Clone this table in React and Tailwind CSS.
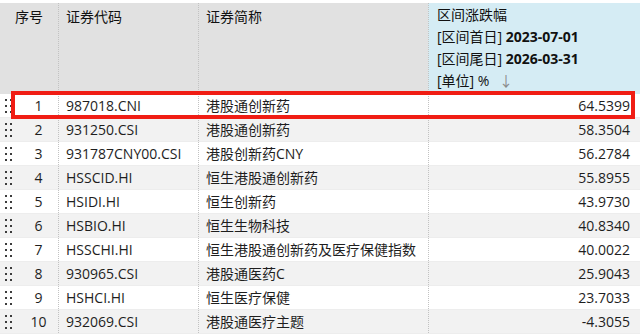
const rows = [
  [1, '987018.CNI', '港股通创新药', '64.5399'],
  [2, '931250.CSI', '港股通创新药', '58.3504'],
  [3, '931787CNY00.CSI', '港股创新药CNY', '56.2784'],
  [4, 'HSSCID.HI', '恒生港股通创新药', '55.8955'],
  [5, 'HSIDI.HI', '恒生创新药', '43.9730'],
  [6, 'HSBIO.HI', '恒生生物科技', '40.8340'],
  [7, 'HSSCHI.HI', '恒生港股通创新药及医疗保健指数', '40.0022'],
  [8, '930965.CSI', '港股通医药C', '25.9043'],
  [9, 'HSHCI.HI', '恒生医疗保健', '23.7033'],
  [10, '932069.CSI', '港股通医疗主题', '-4.3055'],
];

const Handle = () => (
  <div className="grid grid-cols-2 gap-x-[3px] gap-y-[4px] w-[7px]">
    {[0, 1, 2, 3, 4, 5].map((i) => (
      <span key={i} className="block h-[2px] w-[2px] bg-[#3c3c3c]"></span>
    ))}
  </div>
);

const App = () => {
  return (
    <div
      className="relative h-[334px] w-[640px] overflow-hidden bg-white text-[14px] text-[#1e1e1e]"
      style={{ fontFamily: '"Open Sans", "Noto Sans CJK SC", sans-serif' }}
    >
      {/* header */}
      <div className="mt-[3px] grid h-[91px] grid-cols-[58px_140px_230px_1fr] bg-[#e1e1e1] leading-[22px] text-[#111]">
        <div className="pl-[15px] pt-[3px]">序号</div>
        <div className="border-l border-dotted border-[#c2c2c2] pl-[7px] pt-[3px]">证券代码</div>
        <div className="border-l border-dotted border-[#c2c2c2] pl-[7px] pt-[3px]">证券简称</div>
        <div className="border-l border-dotted border-[#c2c2c2] bg-[#d5ecf4] pl-[8px] pt-px">
          <div>区间涨跌幅</div>
          <div>
            [区间首日] <span className="font-bold">2023-07-01</span>
          </div>
          <div>
            [区间尾日] <span className="font-bold">2026-03-31</span>
          </div>
          <div>
            [单位] % <span className="ml-[6px] text-[#8a8a8a]">↓</span>
          </div>
        </div>
      </div>

      {/* rows */}
      {rows.map(([no, code, name, value], i) => (
        <div
          key={no}
          className={
            'grid h-[24px] grid-cols-[19px_39px_140px_230px_1fr] items-stretch border-b border-[#ededed] leading-[23px] ' +
            (i % 2 === 1 ? 'bg-[#f2f2f2]' : 'bg-white')
          }
        >
          <div className="flex items-center pl-[5px]">
            <Handle />
          </div>
          <div className="text-center">{no}</div>
          <div className="border-l border-dotted border-[#c2c2c2] pl-[7px] whitespace-nowrap">{code}</div>
          <div className="border-l border-dotted border-[#c2c2c2] pl-[7px] whitespace-nowrap">{name}</div>
          <div className="border-l border-dotted border-[#c2c2c2] pr-[10px] text-right">{value}</div>
        </div>
      ))}

      {/* highlight */}
      <div className="absolute left-[11px] top-[91px] h-[28px] w-[624px] border-[4px] border-[#f01d14]"></div>
    </div>
  );
};

export default App;
